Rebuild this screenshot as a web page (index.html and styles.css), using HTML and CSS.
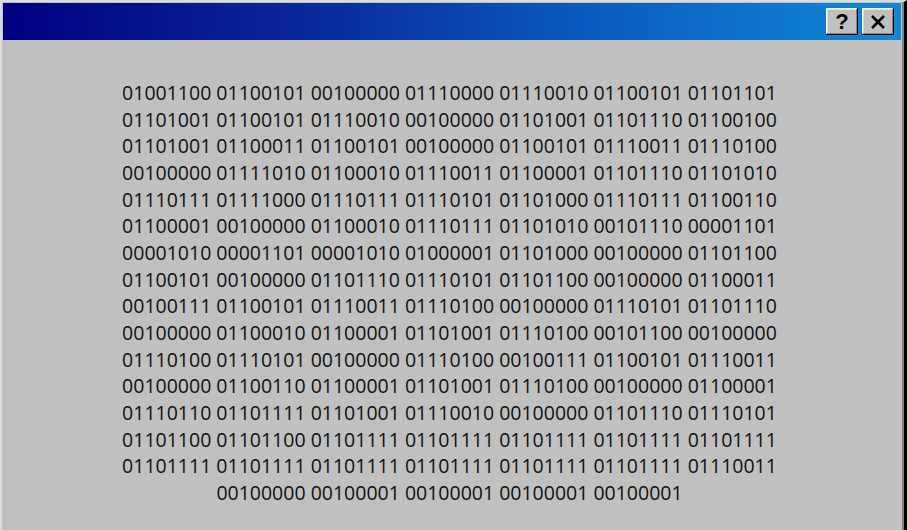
FILE: index.html
```html
<!DOCTYPE html>
<html>
<head>
<meta charset="utf-8">
<link rel="stylesheet" href="styles.css">
</head>
<body>
<div class="window">
  <div class="titlebar">
    <div class="buttons">
      <button class="tbtn help"><span>?</span></button>
      <button class="tbtn close"><svg width="16" height="14" viewBox="0 0 16 14"><path d="M2 1 L14 13 M14 1 L2 13" stroke="#000" stroke-width="2.6" fill="none"/></svg></button>
    </div>
  </div>
  <div class="content">
    <p class="binary">01001100 01100101 00100000 01110000 01110010 01100101 01101101 01101001 01100101 01110010 00100000 01101001 01101110 01100100 01101001 01100011 01100101 00100000 01100101 01110011 01110100 00100000 01111010 01100010 01110011 01100001 01101110 01101010 01110111 01111000 01110111 01110101 01101000 01110111 01100110 01100001 00100000 01100010 01110111 01101010 00101110 00001101 00001010 00001101 00001010 01000001 01101000 00100000 01101100 01100101 00100000 01101110 01110101 01101100 00100000 01100011 00100111 01100101 01110011 01110100 00100000 01110101 01101110 00100000 01100010 01100001 01101001 01110100 00101100 00100000 01110100 01110101 00100000 01110100 00100111 01100101 01110011 00100000 01100110 01100001 01101001 01110100 00100000 01100001 01110110 01101111 01101001 01110010 00100000 01101110 01110101 01101100 01101100 01101111 01101111 01101111 01101111 01101111 01101111 01101111 01101111 01101111 01101111 01101111 01110011 00100000 00100001 00100001 00100001 00100001</p>
  </div>
</div>
</body>
</html>
```
FILE: styles.css
```css
html, body {
  margin: 0;
  padding: 0;
  background: #c0c0c0;
}
.window {
  box-sizing: border-box;
  width: 907px;
  height: 530px;
  background: #c0c0c0;
  border-top: 2px solid #dcdcdc;
  border-left: 2px solid #dcdcdc;
  border-right: 3px solid #000;
  padding: 1px 3px 0 1px;
  box-shadow: inset -2px 0 0 #808080;
  display: flex;
  flex-direction: column;
}
.titlebar {
  height: 37px;
  background: linear-gradient(90deg, #000080 0%, #0a2a9c 35%, #0a5cc0 65%, #1088d4 100%);
  display: flex;
  justify-content: flex-end;
  align-items: flex-start;
  padding: 5px 7px 0 0;
  box-sizing: border-box;
}
.buttons {
  display: flex;
  gap: 4px;
}
.tbtn {
  box-sizing: border-box;
  width: 32px;
  height: 27px;
  padding: 0;
  margin: 0;
  background: #c0c0c0;
  border: none;
  box-shadow: inset -1px -1px 0 #000, inset 1px 1px 0 #fff, inset -2px -2px 0 #808080, inset 2px 2px 0 #dfdfdf;
  display: flex;
  align-items: center;
  justify-content: center;
}
.help span {
  font-family: "Liberation Sans", Arial, sans-serif;
  font-weight: bold;
  font-size: 22px;
  line-height: 1;
  color: #000;
  margin-top: 1px;
}
.close svg {
  display: block;
}
.content {
  flex: 1;
  display: flex;
  justify-content: center;
  padding: 40px 5px 0 0;
}
.binary {
  margin: 0;
  width: 700px;
  text-align: center;
  font-family: "Open Sans", "Noto Sans", sans-serif;
  font-size: 19.5px;
  line-height: 26.67px;
  color: #111;
}
```
